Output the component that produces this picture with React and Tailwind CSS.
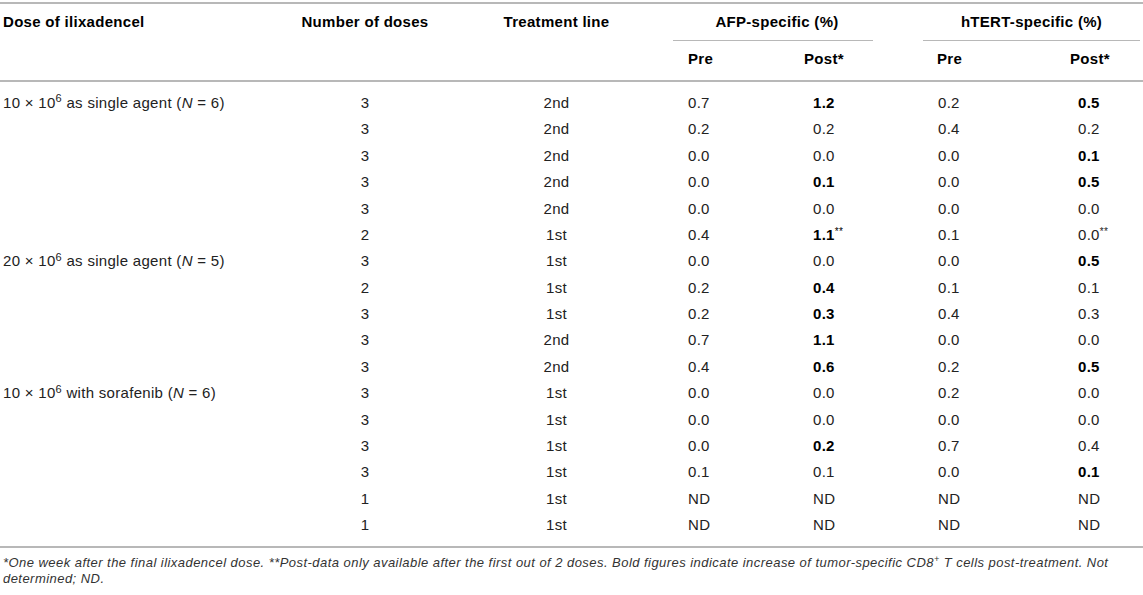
import React from "react";

const COLS = "grid grid-cols-[290px_150px_233px_100px_100px_135px_135px]";

const groups = [
  {
    label: (
      <>
        10 × 10<sup className="text-[11px]">6</sup> as single agent (<i>N</i> = 6)
      </>
    ),
    rows: [
      ["3", "2nd", "0.7", "*1.2", "0.2", "*0.5"],
      ["3", "2nd", "0.2", "0.2", "0.4", "0.2"],
      ["3", "2nd", "0.0", "0.0", "0.0", "*0.1"],
      ["3", "2nd", "0.0", "*0.1", "0.0", "*0.5"],
      ["3", "2nd", "0.0", "0.0", "0.0", "0.0"],
      ["2", "1st", "0.4", "*1.1**", "0.1", "0.0**"],
    ],
  },
  {
    label: (
      <>
        20 × 10<sup className="text-[11px]">6</sup> as single agent (<i>N</i> = 5)
      </>
    ),
    rows: [
      ["3", "1st", "0.0", "0.0", "0.0", "*0.5"],
      ["2", "1st", "0.2", "*0.4", "0.1", "0.1"],
      ["3", "1st", "0.2", "*0.3", "0.4", "0.3"],
      ["3", "2nd", "0.7", "*1.1", "0.0", "0.0"],
      ["3", "2nd", "0.4", "*0.6", "0.2", "*0.5"],
    ],
  },
  {
    label: (
      <>
        10 × 10<sup className="text-[11px]">6</sup> with sorafenib (<i>N</i> = 6)
      </>
    ),
    rows: [
      ["3", "1st", "0.0", "0.0", "0.2", "0.0"],
      ["3", "1st", "0.0", "0.0", "0.0", "0.0"],
      ["3", "1st", "0.0", "*0.2", "0.7", "0.4"],
      ["3", "1st", "0.1", "0.1", "0.0", "*0.1"],
      ["1", "1st", "ND", "ND", "ND", "ND"],
      ["1", "1st", "ND", "ND", "ND", "ND"],
    ],
  },
];

// "*x" = bold value, trailing "**" = footnote mark
function Val({ v }) {
  const bold = v.startsWith("*") && !v.startsWith("**");
  let text = bold ? v.slice(1) : v;
  let mark = null;
  if (text.endsWith("**")) {
    text = text.slice(0, -2);
    mark = <sup className="text-[10px] font-normal">**</sup>;
  }
  return (
    <span className={bold ? "font-bold text-black" : ""}>
      {text}
      {mark}
    </span>
  );
}

export default function App() {
  return (
    <div className="w-[1143px] h-[595px] bg-white pt-[2px] font-['Liberation_Sans',Arial,sans-serif] tracking-[0.02em] text-[15px] text-[#222] overflow-hidden">
      {/* header */}
      <div className="border-t-2 border-b-2 border-[#b8b8b8]">
        <div className={`${COLS} h-[37px] items-center font-bold text-black`}>
          <div className="pl-[3px]">Dose of ilixadencel</div>
          <div className="text-center">Number of doses</div>
          <div className="text-center">Treatment line</div>
          <div className="col-span-2 h-full flex items-center justify-center border-b border-[#b8b8b8] pl-[8px]">
            AFP-specific (%)
          </div>
          <div className="col-span-2 h-full pl-[50px] pr-[3px]">
            <div className="h-full flex items-center justify-center border-b border-[#b8b8b8]">
              hTERT-specific (%)
            </div>
          </div>
        </div>
        <div className={`${COLS} h-[39px] items-center pb-[3px] font-bold text-black`}>
          <div />
          <div />
          <div />
          <div className="pl-[15px]">Pre</div>
          <div className="pl-[31px]">Post*</div>
          <div className="pl-[64px]">Pre</div>
          <div className="pl-[62px]">Post*</div>
        </div>
      </div>

      {/* body */}
      <div className="pt-[8px] pb-[7px] border-b-2 border-[#b8b8b8]">
        {groups.map((g, gi) =>
          g.rows.map((r, ri) => (
            <div key={`${gi}-${ri}`} className={`${COLS} h-[26.4px] items-center`}>
              <div className="pl-[3px] whitespace-nowrap">{ri === 0 ? g.label : null}</div>
              <div className="text-center">{r[0]}</div>
              <div className="text-center">{r[1]}</div>
              <div className="pl-[15px]"><Val v={r[2]} /></div>
              <div className="pl-[40px]"><Val v={r[3]} /></div>
              <div className="pl-[65px]"><Val v={r[4]} /></div>
              <div className="pl-[70px]"><Val v={r[5]} /></div>
            </div>
          ))
        )}
      </div>

      {/* footnote */}
      <p className="pt-[7px] pl-[3px] text-[13px] leading-[16px] tracking-[0.035em] italic text-[#333]">
        *One week after the final ilixadencel dose. **Post-data only available after the first out of 2 doses. Bold
        figures indicate increase of tumor-specific CD8<sup className="text-[9px]">+</sup> T cells post-treatment. Not
        <br />
        determined; ND.
      </p>
    </div>
  );
}
